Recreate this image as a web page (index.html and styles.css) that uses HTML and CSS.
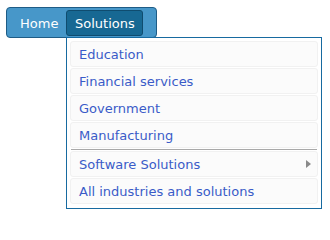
FILE: index.html
```html
<!DOCTYPE html>
<html>
<head>
<meta charset="utf-8">
<link rel="stylesheet" href="styles.css">
</head>
<body>
<div class="menubar">
  <div class="top-item home">Home</div>
  <div class="top-item active">Solutions
    <div class="dropdown">
      <div class="item">Education</div>
      <div class="item">Financial services</div>
      <div class="item">Government</div>
      <div class="item">Manufacturing</div>
      <div class="sep"></div>
      <div class="item sub">Software Solutions<span class="arrow"></span></div>
      <div class="item">All industries and solutions</div>
    </div>
  </div>
</div>
</body>
</html>
```
FILE: styles.css
```css
html, body { margin: 0; padding: 0; background: #fff; }
body { font-family: Verdana, "DejaVu Sans", sans-serif; font-size: 13px; }
*, *::before, *::after { box-sizing: border-box; }
.menubar {
  position: absolute; left: 6px; top: 7px;
  width: 151px; height: 31px;
  background: #4797c9;
  border: 1px solid #1e5c86;
  border-radius: 4px;
  display: flex; align-items: flex-start;
  padding-top: 2px;
}
.top-item {
  color: #fff;
  height: 26px; line-height: 22px;
  padding-top: 3px;
  position: relative;
  white-space: nowrap;
}
.home { width: 59px; padding-left: 13px; }
.top-item.active {
  width: 77px;
  background: #176893;
  border: 1px solid #0f4c6f;
  border-radius: 3px;
  padding-top: 2px;
  padding-left: 8px;
}
.dropdown {
  position: absolute; left: -1px; top: 26px;
  width: 256px;
  background: #fff;
  border: 1px solid #176aa0;
  padding: 3px 3px 4px;
  display: flex; flex-direction: column; gap: 1px;
  line-height: normal;
}
.item {
  color: #3a5bc8;
  height: 26px; line-height: 22px;
  padding: 2px 8px 0;
  background: #fbfbfb;
  border: 1px solid #f1f1f1;
  border-radius: 3px;
  position: relative;
  white-space: nowrap;
}
.sep { height: 1px; background: #a9a9a9; margin: 0 1px; }
.arrow {
  position: absolute; right: 6px; top: 8px;
  width: 0; height: 0;
  border-left: 5px solid #8a8a8a;
  border-top: 4px solid transparent;
  border-bottom: 4px solid transparent;
}
```
